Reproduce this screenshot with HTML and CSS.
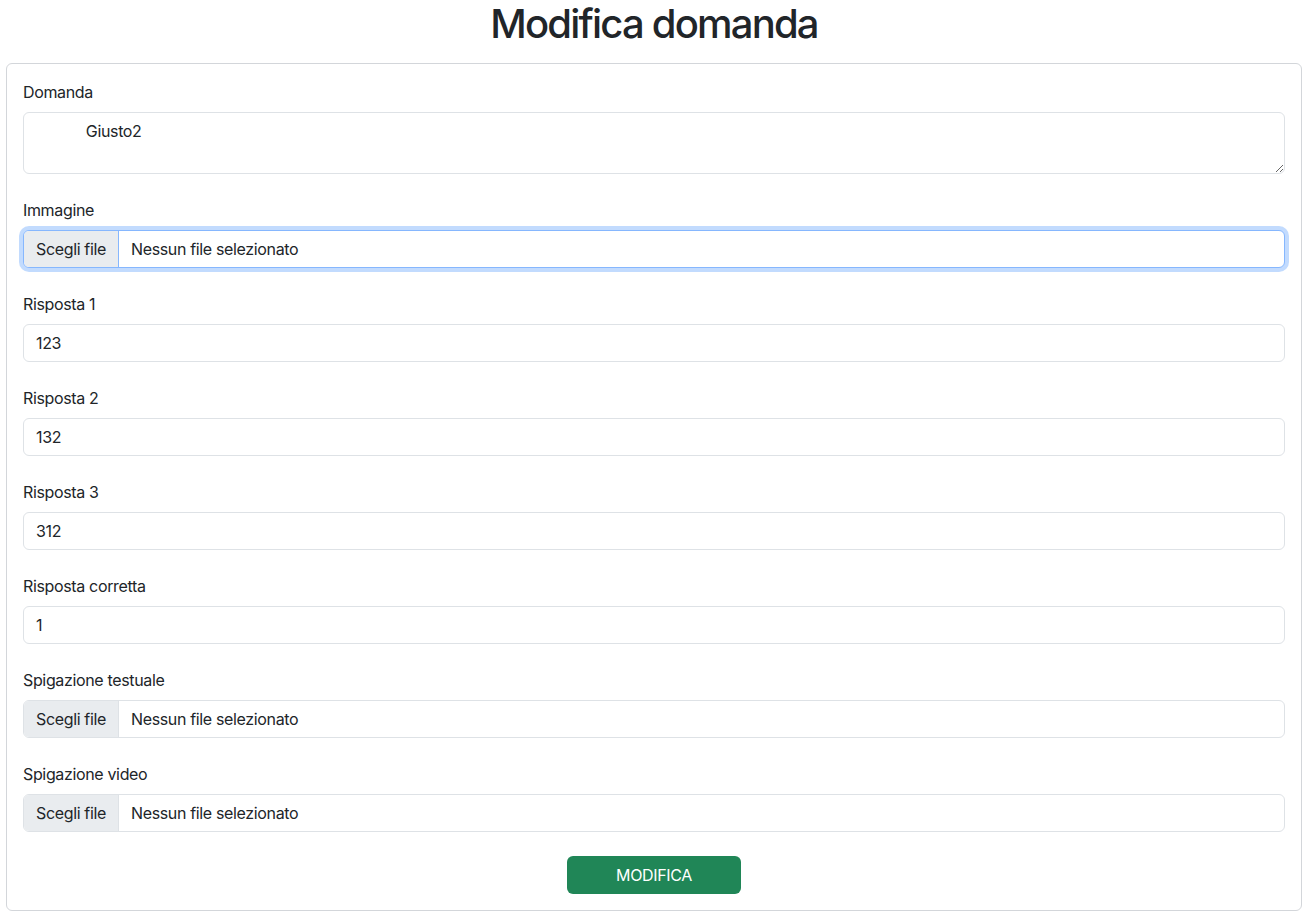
FILE: index.html
```html
<!DOCTYPE html>
<html lang="it">
<head>
<meta charset="utf-8">
<title>Modifica domanda</title>
<link rel="stylesheet" href="styles.css">
</head>
<body>
<div class="page">
  <h1 class="title">Modifica domanda</h1>
  <form class="card">
    <div class="field">
      <label class="label">Domanda</label>
      <textarea class="control textarea">            Giusto2</textarea>
    </div>
    <div class="field">
      <label class="label">Immagine</label>
      <div class="control file focused"><span class="file-btn">Scegli file</span><span class="file-name">Nessun file selezionato</span></div>
    </div>
    <div class="field">
      <label class="label">Risposta 1</label>
      <input class="control" type="text" value="123">
    </div>
    <div class="field">
      <label class="label">Risposta 2</label>
      <input class="control" type="text" value="132">
    </div>
    <div class="field">
      <label class="label">Risposta 3</label>
      <input class="control" type="text" value="312">
    </div>
    <div class="field">
      <label class="label">Risposta corretta</label>
      <input class="control" type="text" value="1">
    </div>
    <div class="field">
      <label class="label">Spigazione testuale</label>
      <div class="control file"><span class="file-btn">Scegli file</span><span class="file-name">Nessun file selezionato</span></div>
    </div>
    <div class="field">
      <label class="label">Spigazione video</label>
      <div class="control file"><span class="file-btn">Scegli file</span><span class="file-name">Nessun file selezionato</span></div>
    </div>
    <div class="actions">
      <button type="button" class="btn">MODIFICA</button>
    </div>
  </form>
</div>
</body>
</html>
```

FILE: styles.css
```css
* { box-sizing: border-box; }
html, body { margin: 0; padding: 0; background: #fff; }
body {
  font-family: Inter, "Liberation Sans", sans-serif;
  font-size: 16px;
  line-height: 1.5;
  letter-spacing: -0.35px;
  color: #212529;
}
.page { padding: 0 8px 0 6px; }
.title {
  margin: 0 0 15px;
  font-size: 40px;
  font-weight: 500;
  line-height: 48px;
  letter-spacing: -1.8px;
  text-align: center;
}
.card {
  display: block;
  border: 1px solid #d3d6da;
  border-radius: 6px;
  padding: 16px;
}
.field { margin-bottom: 24px; }
.label { display: block; margin-bottom: 8px; line-height: 24px; }
.control {
  display: block;
  width: 100%;
  height: 38px;
  padding: 6px 12px;
  font: inherit;
  letter-spacing: inherit;
  color: #212529;
  background: #fff;
  border: 1px solid #dee2e6;
  border-radius: 6px;
  outline: none;
}
.textarea { height: 62px; resize: vertical; }
.file {
  display: flex;
  align-items: stretch;
  padding: 0;
  overflow: hidden;
}
.file-btn {
  display: flex;
  align-items: center;
  padding: 0 12px;
  background: #e9ecef;
  border-right: 1px solid #dee2e6;
  margin-right: 12px;
}
.file-name { display: flex; align-items: center; }
.focused {
  border-color: #86b7fe;
  box-shadow: 0 0 0 4px rgba(13, 110, 253, 0.25);
  overflow: visible;
}
.focused .file-btn { border-radius: 5px 0 0 5px; border-right-color: #86b7fe; }
.actions { display: flex; justify-content: center; }
.btn {
  width: 174px;
  height: 38px;
  font: inherit;
  letter-spacing: inherit;
  color: #fff;
  background: #208657;
  border: 0;
  border-radius: 6px;
}
```
